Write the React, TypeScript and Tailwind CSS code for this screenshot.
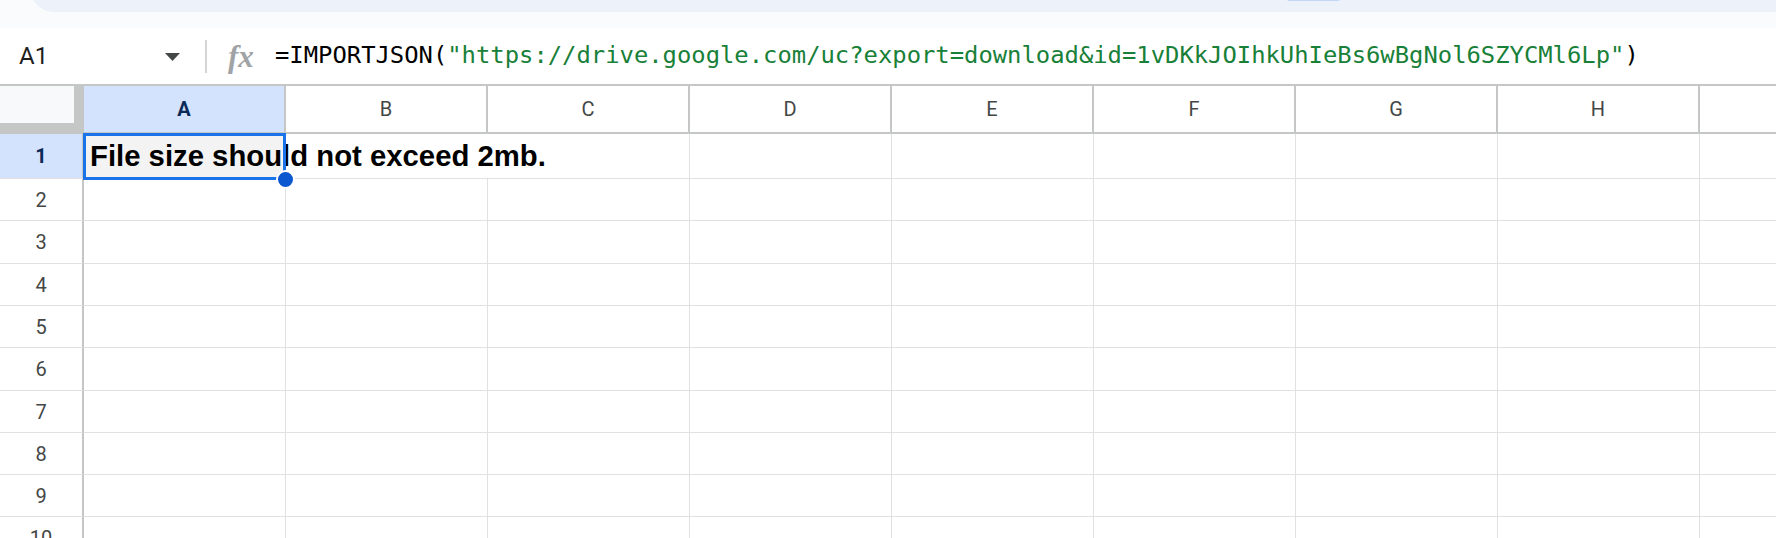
import React from "react";

const cols = ["A", "B", "C", "D", "E", "F", "G", "H"];
// row heights incl. bottom grid line
const rows = [
  { n: 1, h: 45 },
  { n: 2, h: 42 },
  { n: 3, h: 43 },
  { n: 4, h: 42 },
  { n: 5, h: 42 },
  { n: 6, h: 43 },
  { n: 7, h: 42 },
  { n: 8, h: 42 },
  { n: 9, h: 42 },
  { n: 10, h: 42 },
];

const FORMULA_URL =
  '"https://drive.google.com/uc?export=download&id=1vDKkJOIhkUhIeBs6wBgNol6SZYCMl6Lp"';

function TopBands() {
  return (
    <div className="h-[28px] overflow-hidden bg-[#f9fbfd]">
      <div className="relative -mt-[24px] ml-[30px] h-[36px] rounded-bl-[24px] bg-[#edf2fa]">
        <div className="absolute left-[1257px] top-[23px] h-[2px] w-[53px] rounded-b-[2px] bg-[#c2d7fa]" />
      </div>
    </div>
  );
}

function FormulaBar() {
  return (
    <div className="flex h-[56px] items-center bg-white">
      <div className="w-[165px] pl-[19px] font-['Roboto',sans-serif] text-[24px] text-[#1f1f1f]">
        A1
      </div>
      <svg width="15" height="8" viewBox="0 0 15 8" className="mt-[1px]">
        <path d="M0 0 L15 0 L7.5 8 Z" fill="#444746" />
      </svg>
      <div className="ml-[25px] h-[33px] w-[2px] bg-[#d3d5d6]" />
      <div className="ml-[21px] w-[27px] font-['Liberation_Serif',serif] text-[31px] font-bold italic leading-none text-[#a0a3a6]">
        fx
      </div>
      <div className="ml-[20px] whitespace-nowrap font-['DejaVu_Sans_Mono',monospace] text-[23.85px] text-black">
        =IMPORTJSON(<span className="text-[#188038]">{FORMULA_URL}</span>)
      </div>
    </div>
  );
}

function HeaderRow() {
  return (
    <div className="flex h-[50px] border-y-2 border-[#c4c7c5] bg-white">
      <div className="flex h-[46px] w-[84px] shrink-0 flex-col bg-[#c4c7c5]">
        <div className="h-[37px] w-[74px] bg-[#f8f9fa]" />
      </div>
      {cols.map((c, i) => (
        <div
          key={c}
          className={
            "flex h-[46px] w-[202px] shrink-0 items-center justify-center border-r-2 border-[#c4c7c5] font-['Roboto',sans-serif] text-[20px] " +
            (i === 0
              ? "bg-[#d3e3fd] font-bold text-[#0b2a57]"
              : "text-[#444746]")
          }
        >
          {c}
        </div>
      ))}
      <div className="h-[46px] flex-1 bg-white" />
    </div>
  );
}

function GridRow({ n, h }: { n: number; h: number }) {
  const first = n === 1;
  return (
    <div className="flex shrink-0" style={{ height: h }}>
      <div
        className={
          "flex w-[84px] shrink-0 items-center justify-center border-r-2 border-b border-r-[#c4c7c5] border-b-[#e1e1e1] font-['Roboto',sans-serif] text-[20px] " +
          (first
            ? "bg-[#d3e3fd] font-bold text-[#0b2a57]"
            : "bg-white text-[#444746]")
        }
      >
        {n}
      </div>
      {cols.map((c, i) => (
        <div
          key={c}
          className={
            "relative w-[202px] shrink-0 border-b border-r border-[#e1e1e1] " +
            (first && i === 0 ? "bg-[#f3f3f3]" : "bg-white")
          }
        >
          {first && i === 0 && (
            <span className="absolute left-[6px] top-[7px] z-10 whitespace-nowrap font-['Liberation_Sans',Arial,sans-serif] text-[29.3px] font-bold leading-[30px] text-black">
              File size should not exceed 2mb.
            </span>
          )}
          {first && i === 1 && (
            <div className="absolute inset-y-0 -left-px z-[5] w-[260px] bg-white" />
          )}
        </div>
      ))}
      <div className="flex-1 border-b border-[#e1e1e1] bg-white" />
    </div>
  );
}

export default function App() {
  return (
    <div className="relative h-[538px] w-[1776px] overflow-hidden bg-white">
      <TopBands />
      <FormulaBar />
      <HeaderRow />
      <div className="relative">
        {rows.map((r) => (
          <GridRow key={r.n} n={r.n} h={r.h} />
        ))}
        {/* active cell outline + fill handle */}
        <div className="pointer-events-none absolute left-[83px] top-[-1px] z-20 h-[47px] w-[203px] border-[3px] border-[#1a73e8]" />
        <div className="pointer-events-none absolute left-[276px] top-[36px] z-30 h-[19px] w-[19px] rounded-full border-2 border-white bg-[#0b57d0]" />
      </div>
    </div>
  );
}
